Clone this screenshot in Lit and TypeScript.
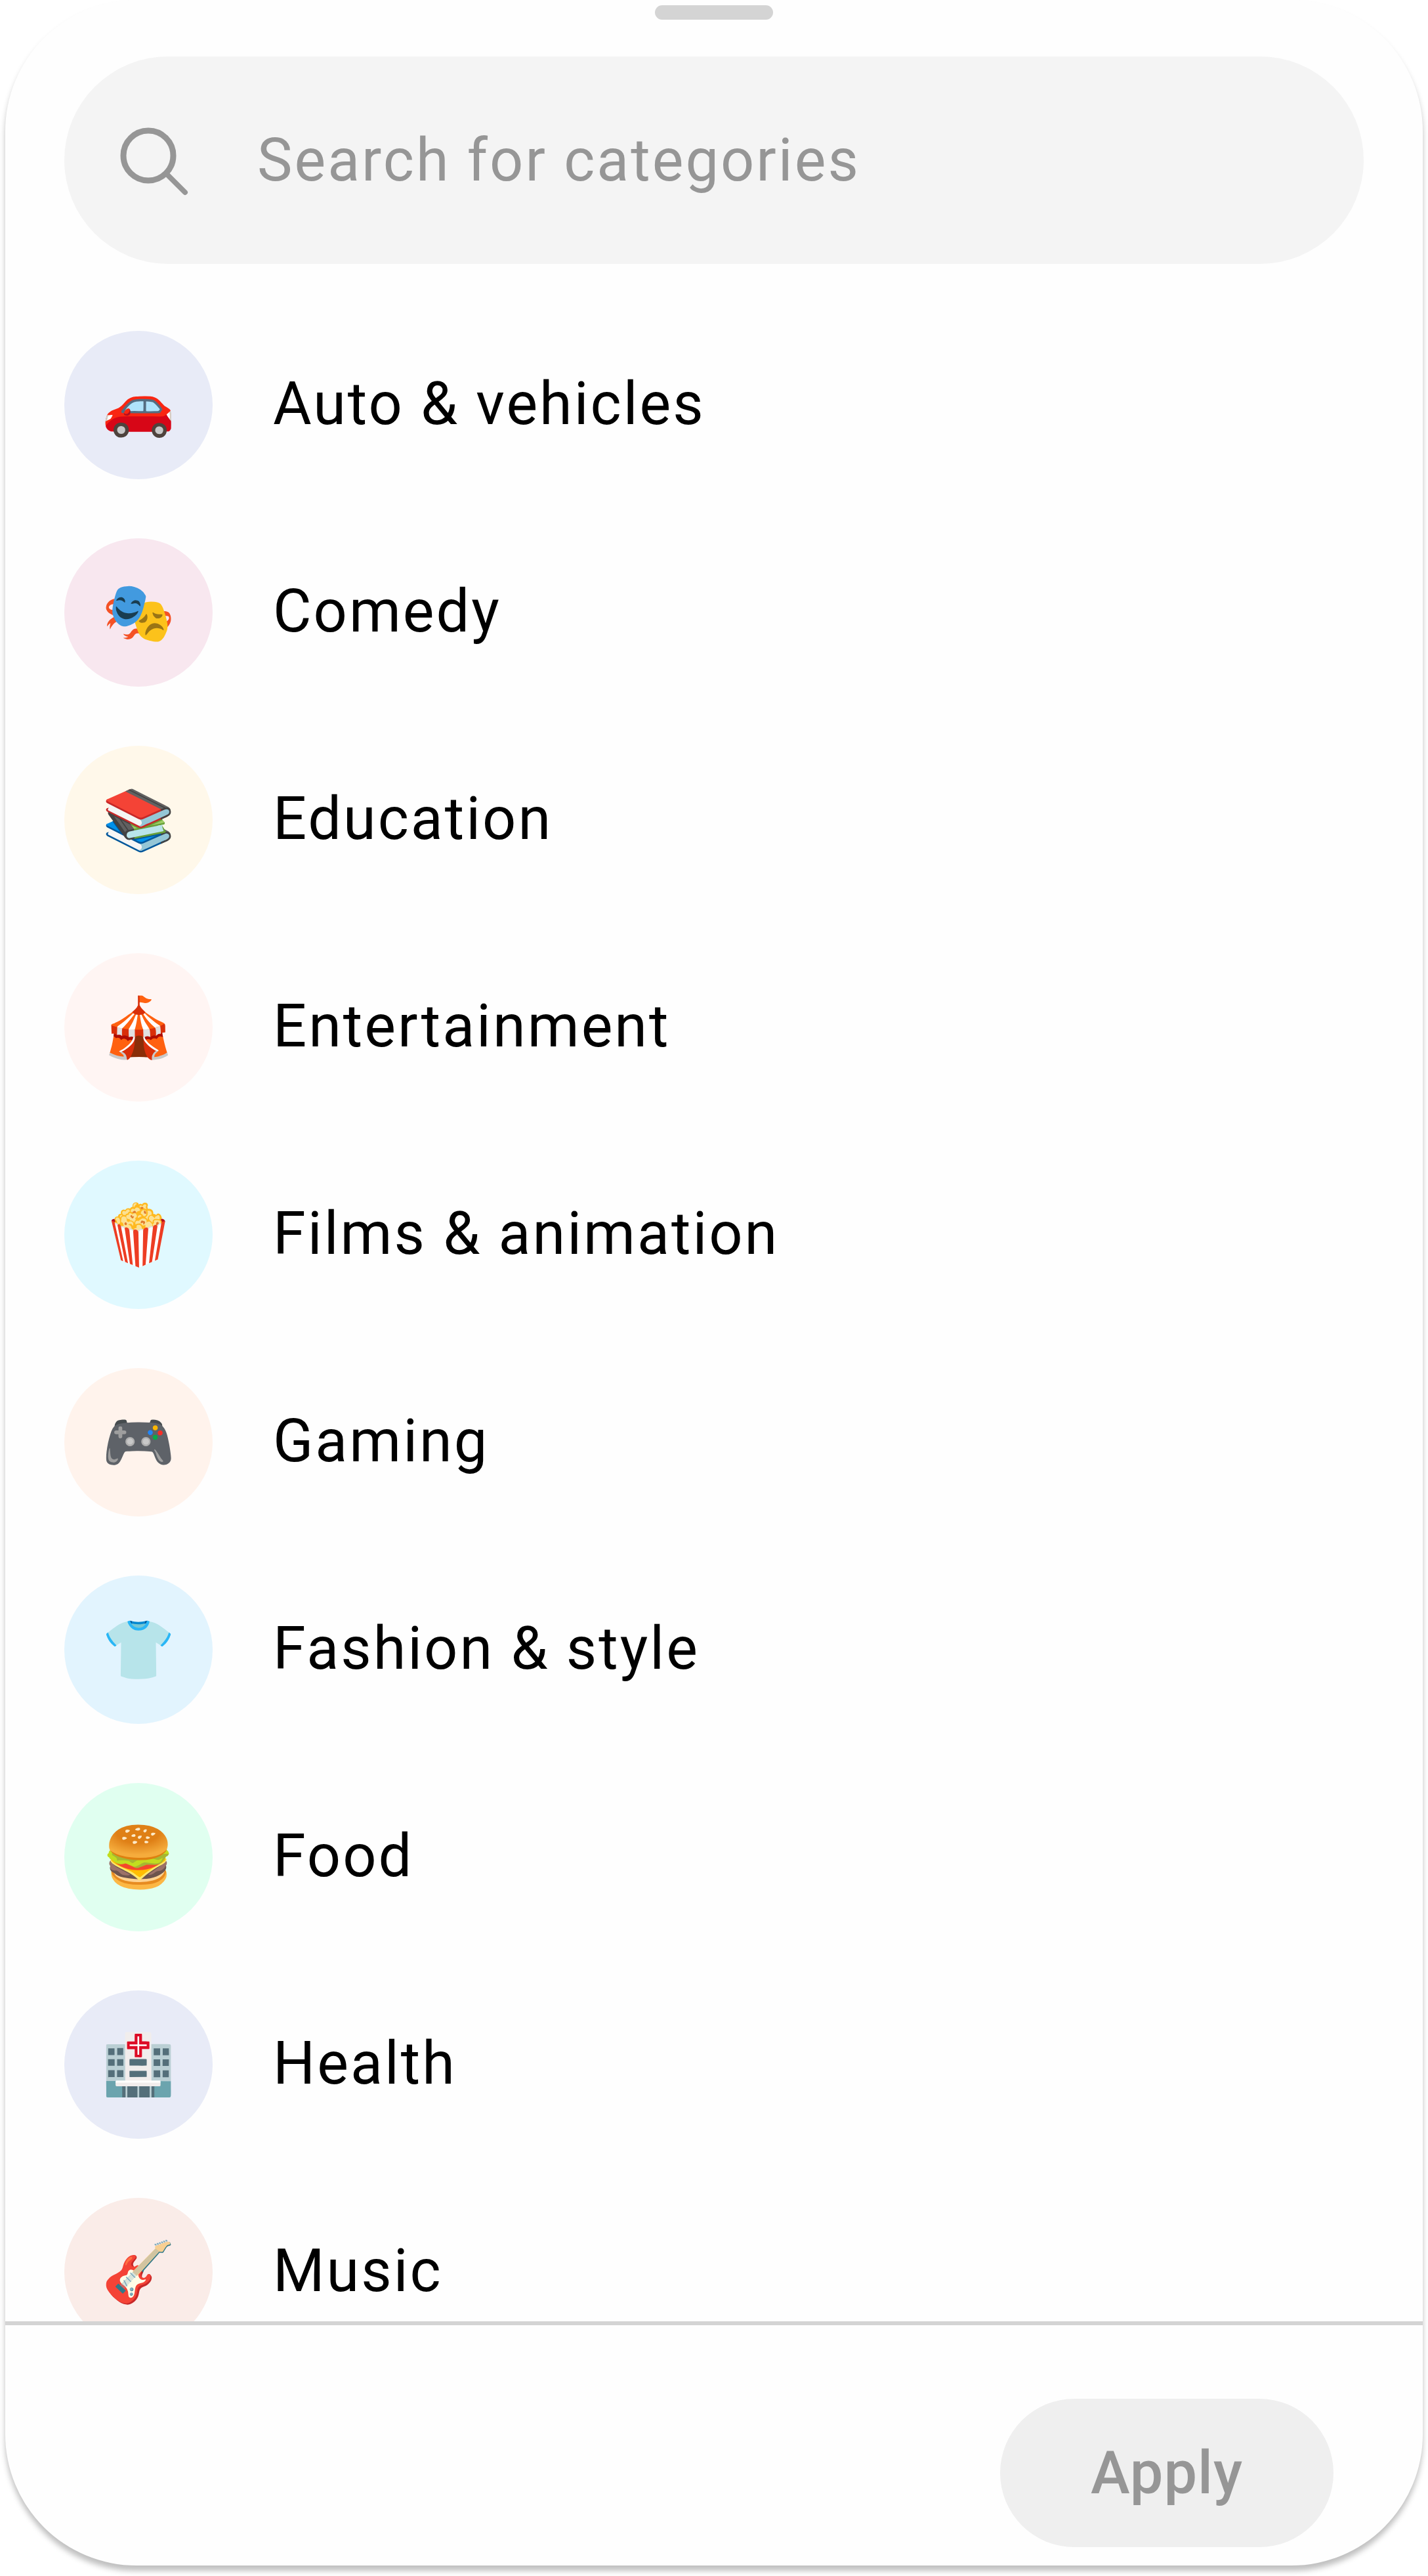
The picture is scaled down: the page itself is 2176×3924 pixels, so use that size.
import { LitElement, html, css } from "lit";
import { customElement } from "lit/decorators.js";

const categories = [
  { label: "Auto & vehicles", icon: "🚗", tint: "#e8ebf7" },
  { label: "Comedy", icon: "🎭", tint: "#f8e7ef" },
  { label: "Education", icon: "📚", tint: "#fff8ea" },
  { label: "Entertainment", icon: "🎪", tint: "#fff5f3" },
  { label: "Films & animation", icon: "🍿", tint: "#e0f9ff" },
  { label: "Gaming", icon: "🎮", tint: "#fff3ec" },
  { label: "Fashion & style", icon: "👕", tint: "#e2f4fe" },
  { label: "Food", icon: "🍔", tint: "#e0fff0" },
  { label: "Health", icon: "🏥", tint: "#e8ebf7" },
  { label: "Music", icon: "🎸", tint: "#faece8" },
];

@customElement("app-root")
export class AppRoot extends LitElement {
  static styles = css`
    :host {
      display: block;
      height: 100vh;
      overflow: hidden;
      background: #fff;
      color: #000;
      font-family: Roboto, sans-serif;
      font-size: 90px;
    }
    * {
      box-sizing: border-box;
    }
    .page {
      height: 100%;
      padding: 0 8px 16px;
    }
    .sheet {
      height: 100%;
      display: flex;
      flex-direction: column;
      border-radius: 200px;
      background: #fefefe;
      box-shadow: 0 8px 8px rgba(0, 0, 0, 0.25);
    }
    .handle {
      flex: none;
      width: 180px;
      height: 22px;
      margin: 8px auto 56px;
      border-radius: 11px;
      background: #d4d4d4;
    }
    .search {
      flex: none;
      display: flex;
      align-items: center;
      gap: 96px;
      height: 316px;
      margin: 0 90px;
      padding: 0 74px;
      border-radius: 158px;
      background: #f4f4f4;
    }
    .search-icon {
      flex: none;
      width: 124px;
      height: 124px;
    }
    .search-input {
      flex: 1;
      min-width: 0;
      border: 0;
      padding: 0;
      outline: 0;
      background: none;
      font: inherit;
      letter-spacing: 3px;
    }
    .search-input::placeholder {
      color: #969696;
      opacity: 1;
    }
    .list {
      flex: 1;
      min-height: 0;
      overflow: hidden;
      display: flex;
      flex-direction: column;
      gap: 90px;
      margin: 0;
      padding: 102px 90px 0;
      list-style: none;
    }
    .row {
      display: flex;
      align-items: center;
      gap: 92px;
      width: 100%;
      border: 0;
      padding: 0;
      background: none;
      color: inherit;
      font: inherit;
      letter-spacing: 3px;
      text-align: left;
    }
    .label {
      padding-bottom: 4px;
    }
    .badge {
      flex: none;
      display: grid;
      place-items: center;
      width: 226px;
      height: 226px;
      border-radius: 50%;
      letter-spacing: 0;
    }
    .footer {
      flex: none;
      display: flex;
      justify-content: flex-end;
      padding: 112px 136px 28px;
      border-top: 6px solid #d4d4d4;
    }
    .apply {
      height: 226px;
      padding: 0 138px;
      border: 0;
      border-radius: 113px;
      background: #efefef;
      color: #969696;
      font: inherit;
      font-weight: 500;
      letter-spacing: 1px;
    }
  `;

  render() {
    return html`
      <div class="page">
        <main class="sheet">
          <div class="handle"></div>
          <label class="search">
            <svg class="search-icon" viewBox="0 0 124 124" fill="none" stroke="#969696" stroke-width="9" aria-hidden="true">
              <circle cx="54" cy="55" r="38" />
              <path d="M81 82l29 29" stroke-linecap="round" stroke-width="8" />
            </svg>
            <input class="search-input" type="search" placeholder="Search for categories" aria-label="Search for categories" />
          </label>
          <ul class="list">
            ${categories.map(
              (c) => html`<li>
                <button class="row" type="button">
                  <span class="badge" style="background:${c.tint}">${c.icon}</span>
                  <span class="label">${c.label}</span>
                </button>
              </li>`
            )}
          </ul>
          <footer class="footer">
            <button class="apply" type="button">Apply</button>
          </footer>
        </main>
      </div>
    `;
  }
}
